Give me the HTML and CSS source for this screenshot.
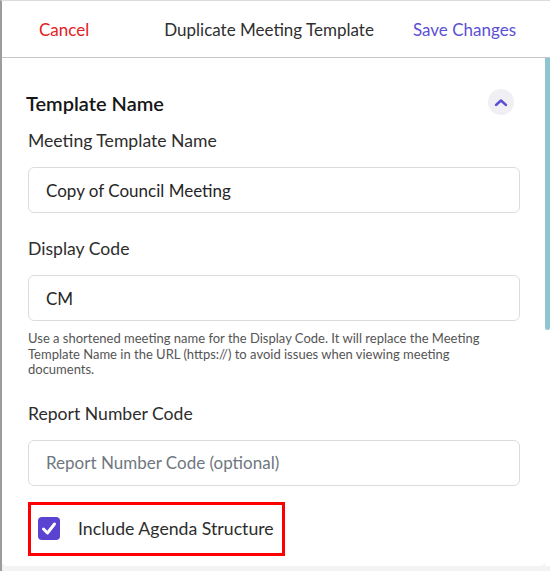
FILE: index.html
```html
<!DOCTYPE html>
<html lang="en">

<head>
    <meta charset="UTF-8">
    <meta name="viewport" content="width=device-width, initial-scale=1.0">
    <title>Duplicate Meeting Template</title>
    <link rel="stylesheet" href="styles.css">
</head>

<body>
    <div class="frame">
        <div class="topbar">
            <a class="cancel" href="#">Cancel</a>
            <div class="title">Duplicate Meeting Template</div>
            <a class="save" href="#">Save Changes</a>
        </div>

        <div class="scroll">
            <div class="card">
                <div class="section-head">
                    <h2>Template Name</h2>
                    <button class="collapse" aria-label="Collapse">
                        <svg width="14" height="9" viewBox="0 0 14 9">
                            <path d="M2 7 L7 2.5 L12 7" fill="none" stroke="#5b4fd6" stroke-width="2.4" stroke-linecap="round" stroke-linejoin="round"/>
                        </svg>
                    </button>
                </div>

                <label class="field-label">Meeting Template Name</label>
                <input class="field" type="text" value="Copy of Council Meeting">

                <label class="field-label">Display Code</label>
                <input class="field" type="text" value="CM">
                <p class="help">Use a shortened meeting name for the Display Code. It will replace the Meeting Template Name in the URL (https://) to avoid issues when viewing meeting documents.</p>

                <label class="field-label">Report Number Code</label>
                <input class="field" type="text" placeholder="Report Number Code (optional)">

                <div class="highlight">
                    <label class="check">
                        <span class="box">
                            <svg width="22" height="23" viewBox="0 0 22 23">
                                <path d="M5.5 12 L9.5 16 L16.5 7" fill="none" stroke="#fff" stroke-width="3" stroke-linecap="round" stroke-linejoin="round"/>
                            </svg>
                        </span>
                        Include Agenda Structure
                    </label>
                </div>
            </div>
            <div class="track">
                <div class="thumb"></div>
            </div>
        </div>
    </div>
</body>

</html>
```

FILE: styles.css
```css
body {
    margin: 0;
    background: #f3f3f3;
    font-family: Lato, "Open Sans", Arial, sans-serif;
    color: #333;
}

.frame {
    display: flex;
    flex-direction: column;
    height: 571px;
    box-sizing: border-box;
    border-top: 1px solid #dcdcdc;
    border-left: 2px solid #9c9c9c;
    overflow: hidden;
}

.topbar {
    display: flex;
    align-items: center;
    height: 56px;
    flex-shrink: 0;
    background: #fff;
    border-bottom: 1px solid #c6c6c6;
    font-size: 17px;
}

.topbar a {
    text-decoration: none;
}

.cancel {
    margin-left: 37px;
    color: #e5201c;
}

.title {
    margin-left: 75px;
    color: #2f2f2f;
}

.save {
    margin-left: auto;
    margin-right: 34px;
    color: #5b4fd6;
}

.scroll {
    display: flex;
    flex: 1;
    background: #f3f3f3;
}

.card {
    display: flex;
    flex-direction: column;
    flex: 1;
    align-self: flex-start;
    background: #fff;
    border-radius: 0 0 5px 5px;
    padding: 31px 25px 10px 24px;
}

.track {
    width: 5px;
    background: #fff;
    height: 508px;
}

.thumb {
    height: 272px;
    background: #8fc5d0;
    border-radius: 0 0 3px 3px;
}

.section-head {
    display: flex;
    justify-content: space-between;
    align-items: center;
    height: 28px;
    padding-right: 6px;
}

.section-head h2 {
    margin: 0;
    font-size: 20px;
    font-weight: 600;
    color: #161616;
}

.collapse {
    display: flex;
    align-items: center;
    justify-content: center;
    width: 26px;
    height: 26px;
    margin-top: -2px;
    padding: 0;
    border: none;
    border-radius: 50%;
    background: #f0eff3;
}

.field-label {
    display: block;
    margin: 24px 0 0 2px;
    font-size: 17.6px;
    line-height: 24px;
    color: #2d2d2d;
}

.section-head + .field-label {
    margin-top: 12px;
}

.field {
    box-sizing: border-box;
    height: 46px;
    margin: 14px 0 0 2px;
    padding: 0 17px;
    border: 1px solid #dcdcdc;
    border-radius: 6px;
    font-family: inherit;
    font-size: 17px;
    color: #262626;
    outline: none;
}

.field::placeholder {
    color: #6f7780;
}

.help {
    margin: 10px 16px 0 2px;
    font-size: 13px;
    line-height: 15.5px;
    color: #555;
}

.highlight {
    align-self: flex-start;
    width: 257px;
    height: 54px;
    box-sizing: border-box;
    margin: 16px 0 0 2px;
    border: 3px solid #ff0000;
    display: flex;
    align-items: center;
    padding-left: 7px;
}

.check {
    display: flex;
    align-items: center;
    gap: 18px;
    font-size: 17.7px;
    color: #2d2d2d;
}

.box {
    display: flex;
    width: 22px;
    height: 23px;
    border-radius: 4px;
    background: #5a43d1;
}
```
